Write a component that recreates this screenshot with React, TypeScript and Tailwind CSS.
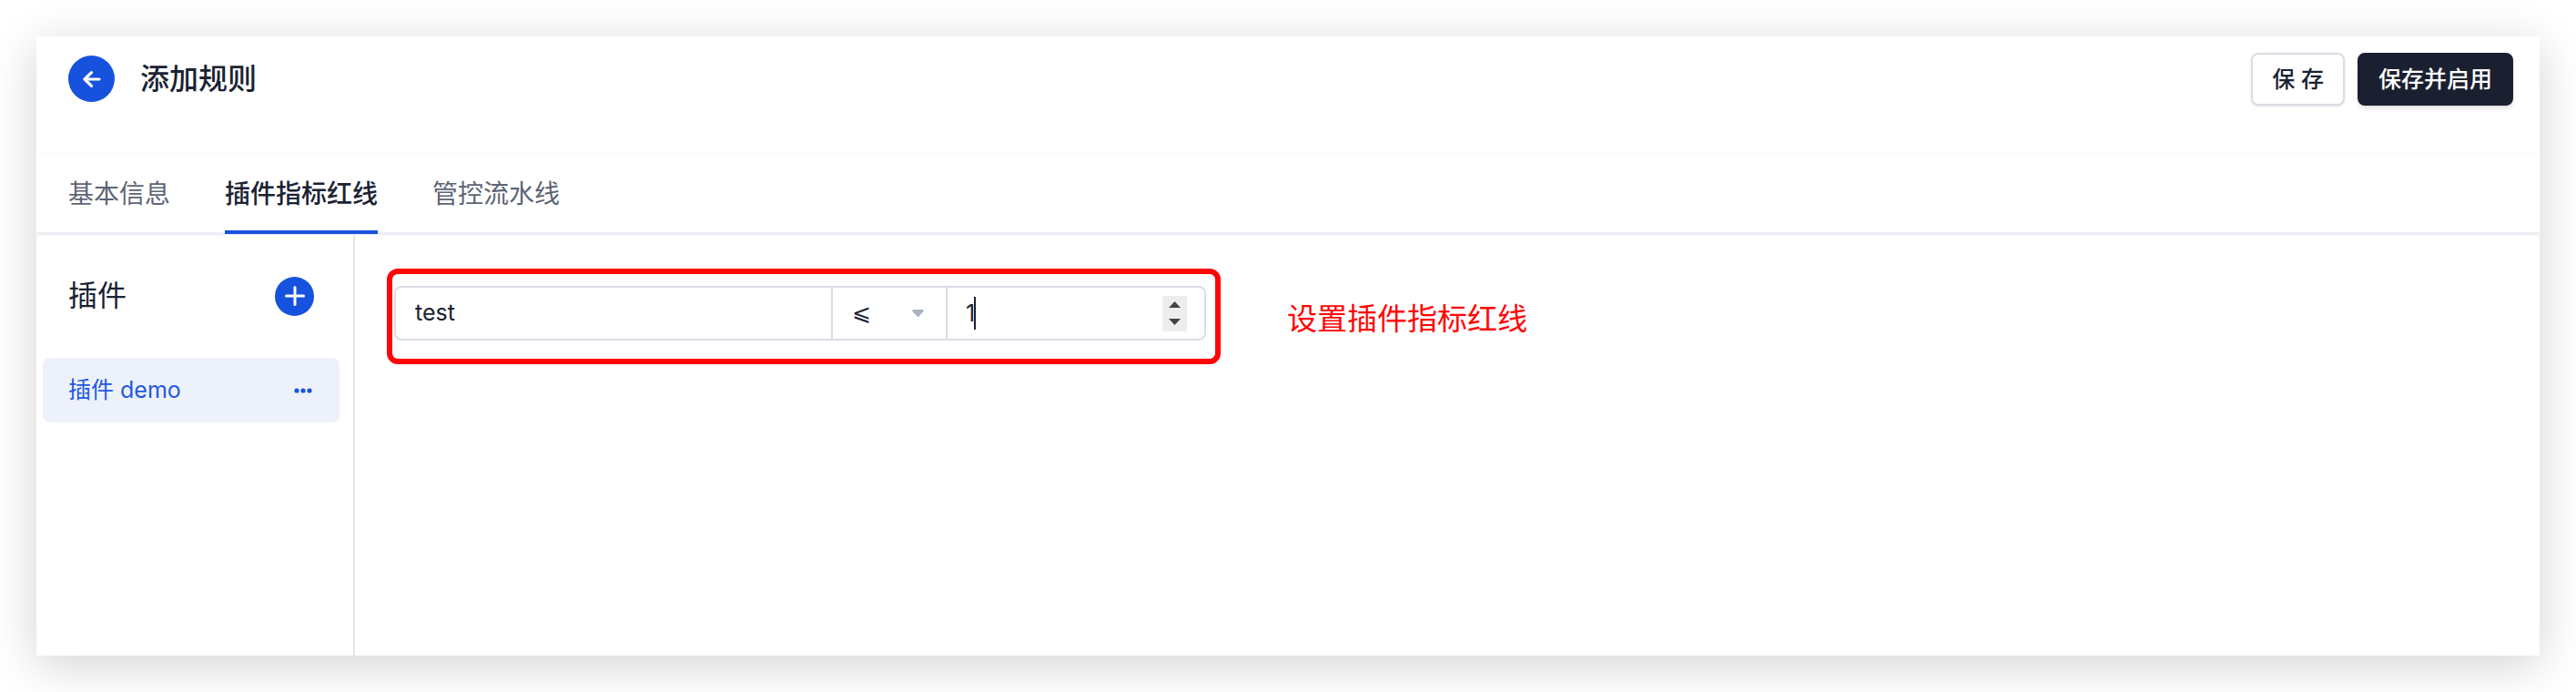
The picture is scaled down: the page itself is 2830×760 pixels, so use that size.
import { useState } from 'react';

const tabs = ['基本信息', '插件指标红线', '管控流水线'];

const Header = () => {
	return (
		<header className="flex h-32 items-start justify-between pt-[18px] pr-[29px] pl-[35px]">
			<div className="flex items-center gap-7 pt-[3px]">
				<button
					aria-label="返回"
					className="flex size-[51px] items-center justify-center rounded-full bg-[#1652de] text-white"
				>
					<svg
						className="h-5 w-5"
						viewBox="0 0 20 20"
						fill="none"
						stroke="currentColor"
						strokeWidth="3.2"
						strokeLinecap="round"
						strokeLinejoin="round"
						aria-hidden="true"
					>
						<path d="M18 10H2M9.5 2.6L2 10l7.5 7.4" />
					</svg>
				</button>
				<h1 className="text-[32px] leading-12 font-medium">添加规则</h1>
			</div>
			<div className="flex gap-[14px] text-[25px] leading-9 font-medium">
				<button className="h-[58px] rounded-lg border-2 border-[#dadde5] bg-white px-[21px] shadow-sm">
					保 存
				</button>
				<button className="h-[58px] rounded-lg border-2 border-[#1a2030] bg-[#1a2030] px-[21px] text-white shadow-md">
					保存并启用
				</button>
			</div>
		</header>
	);
};

const Tabs = ({ active, onChange }) => {
	return (
		<nav className="flex h-[90px] gap-[60px] border-t border-b-3 border-t-[#f8f8fa] border-b-[#eeeff5] pl-[35px] shadow-[0_1px_2px_#f4f5f9]">
			{tabs.map((tab, i) => (
				<button
					key={tab}
					onClick={() => onChange(i)}
					className={
						i === active
							? '-mb-[2px] border-b-4 border-[#1652de] pt-1 text-[28px] font-medium'
							: '-mb-[2px] border-b-4 border-transparent pt-1 text-[28px] text-[#5d6475]'
					}
				>
					{tab}
				</button>
			))}
		</nav>
	);
};

const Sidebar = () => {
	return (
		<aside className="w-[350px] shrink-0 border-r-2 border-[#e4e4eb] pt-[43px] pr-[15px] pl-[7px]">
			<div className="flex items-center justify-between pr-7 pl-7">
				<h2 className="text-[32px] leading-12">插件</h2>
				<button
					aria-label="添加插件"
					className="flex size-[43px] items-center justify-center rounded-full bg-[#1652de] text-white"
				>
					<svg
						className="h-[22px] w-[22px]"
						viewBox="0 0 22 22"
						stroke="currentColor"
						strokeWidth="3"
						strokeLinecap="round"
						aria-hidden="true"
					>
						<path d="M11 1.5v19M1.5 11h19" />
					</svg>
				</button>
			</div>
			<div className="mt-11 flex h-[71px] items-center justify-between rounded-lg bg-[#edf1fa] pr-[30px] pl-7 text-[#1f59e3]">
				<a href="#demo" className="text-[25px]">
					插件 demo
				</a>
				<button aria-label="更多">
					<svg className="h-5 w-5" viewBox="0 0 20 20" fill="#1652de" aria-hidden="true">
						<circle cx="3" cy="10" r="2.6" />
						<circle cx="10" cy="10" r="2.6" />
						<circle cx="17" cy="10" r="2.6" />
					</svg>
				</button>
			</div>
		</aside>
	);
};

const RuleRow = () => {
	const [name, setName] = useState('test');
	const [value, setValue] = useState(1);

	return (
		<div className="rounded-xl border-6 border-[#ff0505] pt-[13px] pr-[10px] pb-5 pl-[2px]">
			<div className="flex h-[60px] w-[892px] rounded-lg border-2 border-[#dadde5] text-[25px]">
				<input
					type="text"
					aria-label="指标名称"
					value={name}
					onChange={(e) => setName(e.target.value)}
					className="min-w-0 flex-1 bg-transparent pl-[21px] outline-none"
				/>
				<div className="relative w-[128px] border-x-2 border-[#dadde5]">
					<select
						aria-label="比较方式"
						className="h-full w-full appearance-none bg-transparent pl-[21px] outline-none"
					>
						<option>⩽</option>
						<option>⩾</option>
					</select>
					<svg
						className="pointer-events-none absolute top-6 right-6 h-2 w-[13px]"
						viewBox="0 0 13 8"
						fill="#aab2c4"
						aria-hidden="true"
					>
						<path d="M1 0h11q1.500 0.500 0.600 1.700L7.500 7.400q-1 1-2 0L0.400 1.700Q-0.500 0.500 1 0z" />
					</svg>
				</div>
				<div className="relative flex w-[282px] items-center pr-[19px]">
					<input
						type="number"
						aria-label="指标值"
						value={value}
						onChange={(e) => setValue(Number(e.target.value))}
						className="h-full min-w-0 flex-1 appearance-none bg-transparent pl-5 caret-transparent outline-none [&::-webkit-inner-spin-button]:appearance-none"
					/>
					<span className="absolute top-[10px] left-[29px] h-9 w-[2px] bg-[#1a2030]" />
					<div className="flex h-[39px] w-[27px] flex-col bg-[#ededed]">
						<button
							aria-label="增加"
							onClick={() => setValue(value + 1)}
							className="flex flex-1 items-center justify-center"
						>
							<svg className="h-[7px] w-[13px]" viewBox="0 0 13 7" fill="#444" aria-hidden="true">
								<path d="M6.500 0L13 7H0z" />
							</svg>
						</button>
						<button
							aria-label="减少"
							onClick={() => setValue(value - 1)}
							className="flex flex-1 items-center justify-center"
						>
							<svg className="h-[7px] w-[13px]" viewBox="0 0 13 7" fill="#444" aria-hidden="true">
								<path d="M0 0h13L6.500 7z" />
							</svg>
						</button>
					</div>
				</div>
			</div>
		</div>
	);
};

const App = () => {
	const [active, setActive] = useState(1);

	return (
		<div className="flex min-h-screen bg-white p-10 font-['Inter','Noto_Sans_CJK_SC',sans-serif] text-[#1a2333]">
			<div className="flex min-w-0 flex-1 flex-col bg-white shadow-[0_10px_48px_rgba(0,0,0,0.18)]">
				<Header />
				<Tabs active={active} onChange={setActive} />
				<div className="flex flex-1">
					<Sidebar />
					<main className="flex flex-1 items-start gap-[73px] pt-[37px] pl-[35px]">
						<RuleRow />
						<p className="pt-[31px] text-[33px] leading-12 text-[#ff0505]">设置插件指标红线</p>
					</main>
				</div>
			</div>
		</div>
	);
};

export default App;
